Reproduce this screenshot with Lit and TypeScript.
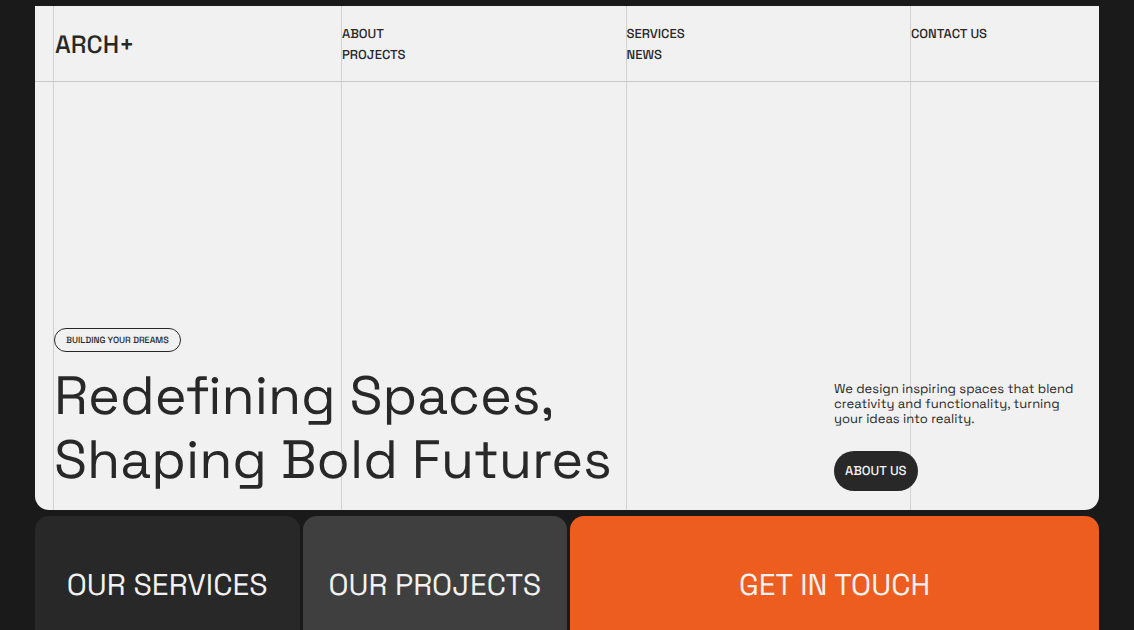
import { LitElement, html, css } from "lit";
import { customElement } from "lit/decorators.js";

@customElement("app-root")
export class AppRoot extends LitElement {
  static styles = css`
    :host {
      display: block;
      box-sizing: border-box;
      height: 100vh;
      overflow: hidden;
      padding: 6px 35px 0 35px;
      background: #1a1a1a;
      color: #282828;
      font-family: "Space Grotesk", Inter, "Liberation Sans", sans-serif;
      text-rendering: geometricPrecision;
      font-variant-ligatures: none;
    }
    * { box-sizing: border-box; }
    a { color: inherit; text-decoration: none; }
    .page { display: flex; flex-direction: column; gap: 6px; height: 100%; }
    .hero {
      flex: 0 0 80vh;
      display: flex;
      flex-direction: column;
      position: relative;
      overflow: hidden;
      background: #f1f1f1;
      border-radius: 0 0 14px 14px;
    }
    .guides, .bar {
      display: grid;
      grid-template-columns: 288px 1fr 1fr 189px;
      padding-left: 18px;
    }
    .guides { position: absolute; inset: 0; pointer-events: none; }
    .guides span { border-left: 1px solid #d2d2d2; }
    .bar { flex: none; height: 76px; border-bottom: 1px solid #c8c8c8; position: relative; font-weight: 500; }
    .brand { align-self: center; padding: 2px 0 0 2px; font-size: 25px; line-height: 32px; }
    .links { display: flex; flex-direction: column; align-items: start; padding: 17px 0 0 1px; font-size: 13px; line-height: 21px; }
    .body { flex: 1; position: relative; display: flex; justify-content: space-between; align-items: flex-end; padding: 0 24px 18px 19px; }
    .tag { display: inline-block; border: 1px solid #282828; border-radius: 12px; padding: 0 11px; font-size: 9px; font-weight: 500; line-height: 22px; }
    h1 { margin: 12px 0 0; font-size: 54px; line-height: 64px; font-weight: 400; white-space: nowrap; }
    .aside { width: 241px; padding-bottom: 1px; }
    p { margin: 0 0 25px; font-size: 13px; line-height: 15px; white-space: nowrap; }
    button { display: block; border: 0; border-radius: 20px; height: 40px; padding: 0 11px; background: #282828; color: #f1f1f1; font: 500 13px/20px "Space Grotesk", Inter, sans-serif; text-rendering: inherit; }
    .tiles { flex: 1; min-height: 0; display: grid; grid-template-columns: 1fr 1fr 2fr; gap: 3px; }
    .tile { border-radius: 14px 14px 0 0; background: #282828; color: #f1f1f1; text-align: center; padding-top: 49px; font-size: 30px; line-height: 40px; white-space: nowrap; }
    .mid { background: #3f3f3f; }
    .hot { background: #ed5d1f; }
  `;

  render() {
    return html`
      <div class="page">
        <main class="hero">
          <div class="guides"><span></span><span></span><span></span><span></span></div>
          <nav class="bar">
            <a class="brand" href="#">ARCH+</a>
            <div class="links"><a href="#about">ABOUT</a><a href="#projects">PROJECTS</a></div>
            <div class="links"><a href="#services">SERVICES</a><a href="#news">NEWS</a></div>
            <div class="links"><a href="#contact">CONTACT US</a></div>
          </nav>
          <section class="body">
            <div>
              <span class="tag">BUILDING YOUR DREAMS</span>
              <h1>Redefining Spaces,<br />Shaping Bold Futures</h1>
            </div>
            <div class="aside">
              <p>We design inspiring spaces that blend<br />creativity and functionality, turning<br />your ideas into reality.</p>
              <button type="button">ABOUT US</button>
            </div>
          </section>
        </main>
        <div class="tiles">
          <a class="tile" href="#services">OUR SERVICES</a>
          <a class="tile mid" href="#projects">OUR PROJECTS</a>
          <a class="tile hot" href="#contact">GET IN TOUCH</a>
        </div>
      </div>
    `;
  }
}
